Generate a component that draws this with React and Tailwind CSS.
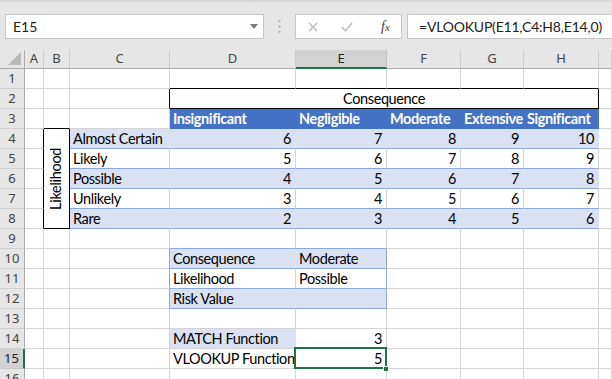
import React from "react";

const FONT = { fontFamily: "Lato, 'Liberation Sans', sans-serif" };

const g = "border-r border-b border-r-[#d4d4d4] border-b-[#d4d4d4]";
const band = "bg-[#d9e1f2] border-r border-b border-r-[#d9e1f2] border-b-[#8ea9db]";
const white = "border-r border-b border-r-[#d4d4d4] border-b-[#8ea9db]";
const head = "bg-[#4472c4] border-r border-b border-r-[#4472c4] border-b-[#4472c4] text-white font-bold";

function Cell({ className = "", children }) {
  return (
    <div className={`flex items-end whitespace-nowrap overflow-visible px-[3px] text-[14.5px] tracking-[-0.4px] leading-[18px] text-black ${className}`}>
      {children}
    </div>
  );
}

function Num({ className = "", children }) {
  return <Cell className={`justify-end pr-[4px] ${className}`}>{children}</Cell>;
}

function RowHead({ n, active }) {
  return (
    <div
      className={
        active
          ? "flex items-center justify-center bg-[#d2d2d2] border-r-2 border-b border-r-[#217346] border-b-[#c8c8c8] text-[13px] text-[#222]"
          : "flex items-center justify-center bg-[#e6e6e6] border-r border-b border-r-[#ababab] border-b-[#d0d0d0] text-[13px] text-[#444]"
      }
      style={{ fontFamily: "'Noto Sans', sans-serif" }}
    >
      {n}
    </div>
  );
}

function Toolbar() {
  return (
    <div className="h-[50px] bg-[#e6e6e6] flex flex-col">
      <div className="h-[4px] bg-gradient-to-b from-[#d2d2d2] to-[#ececec]" />
      <div className="flex pt-[10px] pl-[5px]">
        <div className="w-[259px] h-[25px] bg-white border border-[#c6c6c6] flex items-center justify-between pl-[7px] pr-[5px]">
          <span className="text-[14px] text-[#222]">E15</span>
          <svg width="8" height="5" viewBox="0 0 8 5">
            <polygon points="0,0 8,0 4,5" fill="#7a7a7a" />
          </svg>
        </div>
        <div className="w-[31px] flex items-center justify-center">
          <svg width="3" height="13" viewBox="0 0 3 13">
            <rect x="0.5" y="0" width="2" height="2" fill="#b0b0b0" />
            <rect x="0.5" y="5.5" width="2" height="2" fill="#b0b0b0" />
            <rect x="0.5" y="11" width="2" height="2" fill="#b0b0b0" />
          </svg>
        </div>
        <div className="w-[107px] h-[25px] bg-white border border-[#c6c6c6] flex items-center">
          <svg className="ml-[12px]" width="10" height="10" viewBox="0 0 10 10">
            <path d="M1 1 L9 9 M9 1 L1 9" stroke="#b8b8b8" strokeWidth="1.2" fill="none" />
          </svg>
          <svg className="ml-[23px]" width="12" height="10" viewBox="0 0 12 10">
            <path d="M1 5 L4.5 9 L11 1" stroke="#b8b8b8" strokeWidth="1.3" fill="none" />
          </svg>
          <span
            className="ml-[28px] italic text-[14px] text-[#444]"
            style={{ fontFamily: "'Liberation Serif', serif" }}
          >
            f<span className="text-[11px]">x</span>
          </span>
        </div>
        <div className="ml-[5px] flex-1 h-[25px] bg-white border-y border-l border-[#c6c6c6] flex items-center pl-[11px]">
          <span className="text-[14px] tracking-[-0.2px] text-[#222]">=VLOOKUP(E11,C4:H8,E14,0)</span>
        </div>
      </div>
    </div>
  );
}

function ColHeaders() {
  const cols = ["A", "B", "C", "D", "E", "F", "G", "H", ""];
  return (
    <>
      <div className="bg-[#e6e6e6] border-r border-b border-r-[#ababab] border-b-[#ababab] flex items-end justify-end pr-[3px] pb-[3px]">
        <svg width="13" height="13" viewBox="0 0 13 13">
          <polygon points="13,0 13,13 0,13" fill="#b9b9b9" />
        </svg>
      </div>
      {cols.map((c, i) =>
        c === "E" ? (
          <div
            key={i}
            className="bg-[#d2d2d2] border-r border-b-2 border-r-[#c0c0c0] border-b-[#217346] flex items-center justify-center text-[13px] text-[#222]"
            style={{ fontFamily: "'Noto Sans', sans-serif" }}
          >
            {c}
          </div>
        ) : (
          <div
            key={i}
            className="bg-[#e6e6e6] border-r border-b border-r-[#cdcdcd] border-b-[#ababab] flex items-center justify-center text-[13px] text-[#444]"
            style={{ fontFamily: "'Noto Sans', sans-serif" }}
          >
            {c}
          </div>
        )
      )}
    </>
  );
}

const table = [
  ["Almost Certain", 6, 7, 8, 9, 10],
  ["Likely", 5, 6, 7, 8, 9],
  ["Possible", 4, 5, 6, 7, 8],
  ["Unlikely", 3, 4, 5, 6, 7],
  ["Rare", 2, 3, 4, 5, 6],
];

export default function App() {
  return (
    <div className="w-[612px] h-[379px] overflow-hidden bg-white" style={FONT}>
      <Toolbar />
      <div className="grid grid-cols-[25px_19px_26px_100px_126px_91px_74px_63px_75px_1fr] grid-rows-[19px_repeat(16,20px)]">
        <ColHeaders />

        {/* row 1 */}
        <RowHead n={1} />
        <Cell className={g} />
        <Cell className={g} />
        <Cell className={g} />
        <Cell className="border-r border-b border-r-[#d4d4d4] border-b-black" />
        <Cell className="border-r border-b border-r-[#d4d4d4] border-b-black" />
        <Cell className="border-r border-b border-r-[#d4d4d4] border-b-black" />
        <Cell className="border-r border-b border-r-[#d4d4d4] border-b-black" />
        <Cell className="border-r border-b border-r-[#d4d4d4] border-b-black" />
        <Cell className={g} />

        {/* row 2 */}
        <RowHead n={2} />
        <Cell className={g} />
        <Cell className={g} />
        <Cell className="border-r border-b border-r-black border-b-[#d4d4d4]" />
        <Cell className="col-span-5 justify-center border-r border-b border-r-black border-b-black">Consequence</Cell>
        <Cell className={g} />

        {/* row 3 */}
        <RowHead n={3} />
        <Cell className={g} />
        <Cell className="border-r border-b border-r-[#d4d4d4] border-b-black" />
        <Cell className={g} />
        <Cell className={head}>Insignificant</Cell>
        <Cell className={head}>Negligible</Cell>
        <Cell className={head}>Moderate</Cell>
        <Cell className={head}>Extensive</Cell>
        <Cell className={head}>Significant</Cell>
        <Cell className={g} />

        {/* rows 4-8 */}
        {table.map((r, i) => {
          const cls = i % 2 === 0 ? band : white;
          return (
            <React.Fragment key={i}>
              <RowHead n={4 + i} />
              <Cell className="border-r border-b border-r-black border-b-[#d4d4d4]" />
              {i === 0 && (
                <div className="row-span-5 border-r border-b border-r-black border-b-black flex items-center justify-center">
                  <span className="-rotate-90 whitespace-nowrap text-[14.5px] tracking-[-0.3px] text-black">Likelihood</span>
                </div>
              )}
              <Cell className={cls}>{r[0]}</Cell>
              {r.slice(1).map((v, j) => (
                <Num key={j} className={cls}>{v}</Num>
              ))}
              <Cell className={g} />
            </React.Fragment>
          );
        })}

        {/* row 9 */}
        <RowHead n={9} />
        <Cell className={g} />
        <Cell className={g} />
        <Cell className={g} />
        <Cell className="border-r border-b border-r-[#d4d4d4] border-b-[#8ea9db]" />
        <Cell className="border-r border-b border-r-[#d4d4d4] border-b-[#8ea9db]" />
        <Cell className={g} />
        <Cell className={g} />
        <Cell className={g} />
        <Cell className={g} />

        {/* rows 10-12 */}
        {[
          ["Consequence", "Moderate", true],
          ["Likelihood", "Possible", false],
          ["Risk Value", "", true],
        ].map(([a, b, filled], i) => (
          <React.Fragment key={i}>
            <RowHead n={10 + i} />
            <Cell className={g} />
            <Cell className={g} />
            <Cell className="border-r border-b border-r-[#8ea9db] border-b-[#d4d4d4]" />
            <Cell
              className={
                filled
                  ? "bg-[#d9e1f2] border-r border-b border-r-[#d9e1f2] border-b-[#8ea9db]"
                  : "border-r border-b border-r-[#d4d4d4] border-b-[#8ea9db]"
              }
            >
              {a}
            </Cell>
            <Cell
              className={
                filled
                  ? "bg-[#d9e1f2] border-r border-b border-r-[#8ea9db] border-b-[#8ea9db]"
                  : "border-r border-b border-r-[#8ea9db] border-b-[#8ea9db]"
              }
            >
              {b}
            </Cell>
            <Cell className={g} />
            <Cell className={g} />
            <Cell className={g} />
            <Cell className={g} />
          </React.Fragment>
        ))}

        {/* row 13 */}
        <RowHead n={13} />
        {Array.from({ length: 9 }).map((_, i) => (
          <Cell key={i} className={g} />
        ))}

        {/* row 14 */}
        <RowHead n={14} />
        <Cell className={g} />
        <Cell className={g} />
        <Cell className={g} />
        <Cell className="bg-[#d9e1f2] border-r border-b border-r-[#d9e1f2] border-b-[#d4d4d4]">MATCH Function</Cell>
        <Num className={g}>3</Num>
        <Cell className={g} />
        <Cell className={g} />
        <Cell className={g} />
        <Cell className={g} />

        {/* row 15 */}
        <RowHead n={15} active />
        <Cell className={g} />
        <Cell className={g} />
        <Cell className={g} />
        <Cell className={g}>VLOOKUP Function</Cell>
        <Num className={`relative ${g}`}>
          5
          <div className="absolute -left-[2px] -top-[2px] w-[93px] h-[22px] border-2 border-[#217346]" />
          <div className="absolute -right-[3px] -bottom-[4px] w-[6px] h-[6px] bg-[#217346] border border-white" />
        </Num>
        <Cell className={g} />
        <Cell className={g} />
        <Cell className={g} />
        <Cell className={g} />

        {/* row 16 */}
        <RowHead n={16} />
        {Array.from({ length: 9 }).map((_, i) => (
          <Cell key={i} className={g} />
        ))}
      </div>
    </div>
  );
}
